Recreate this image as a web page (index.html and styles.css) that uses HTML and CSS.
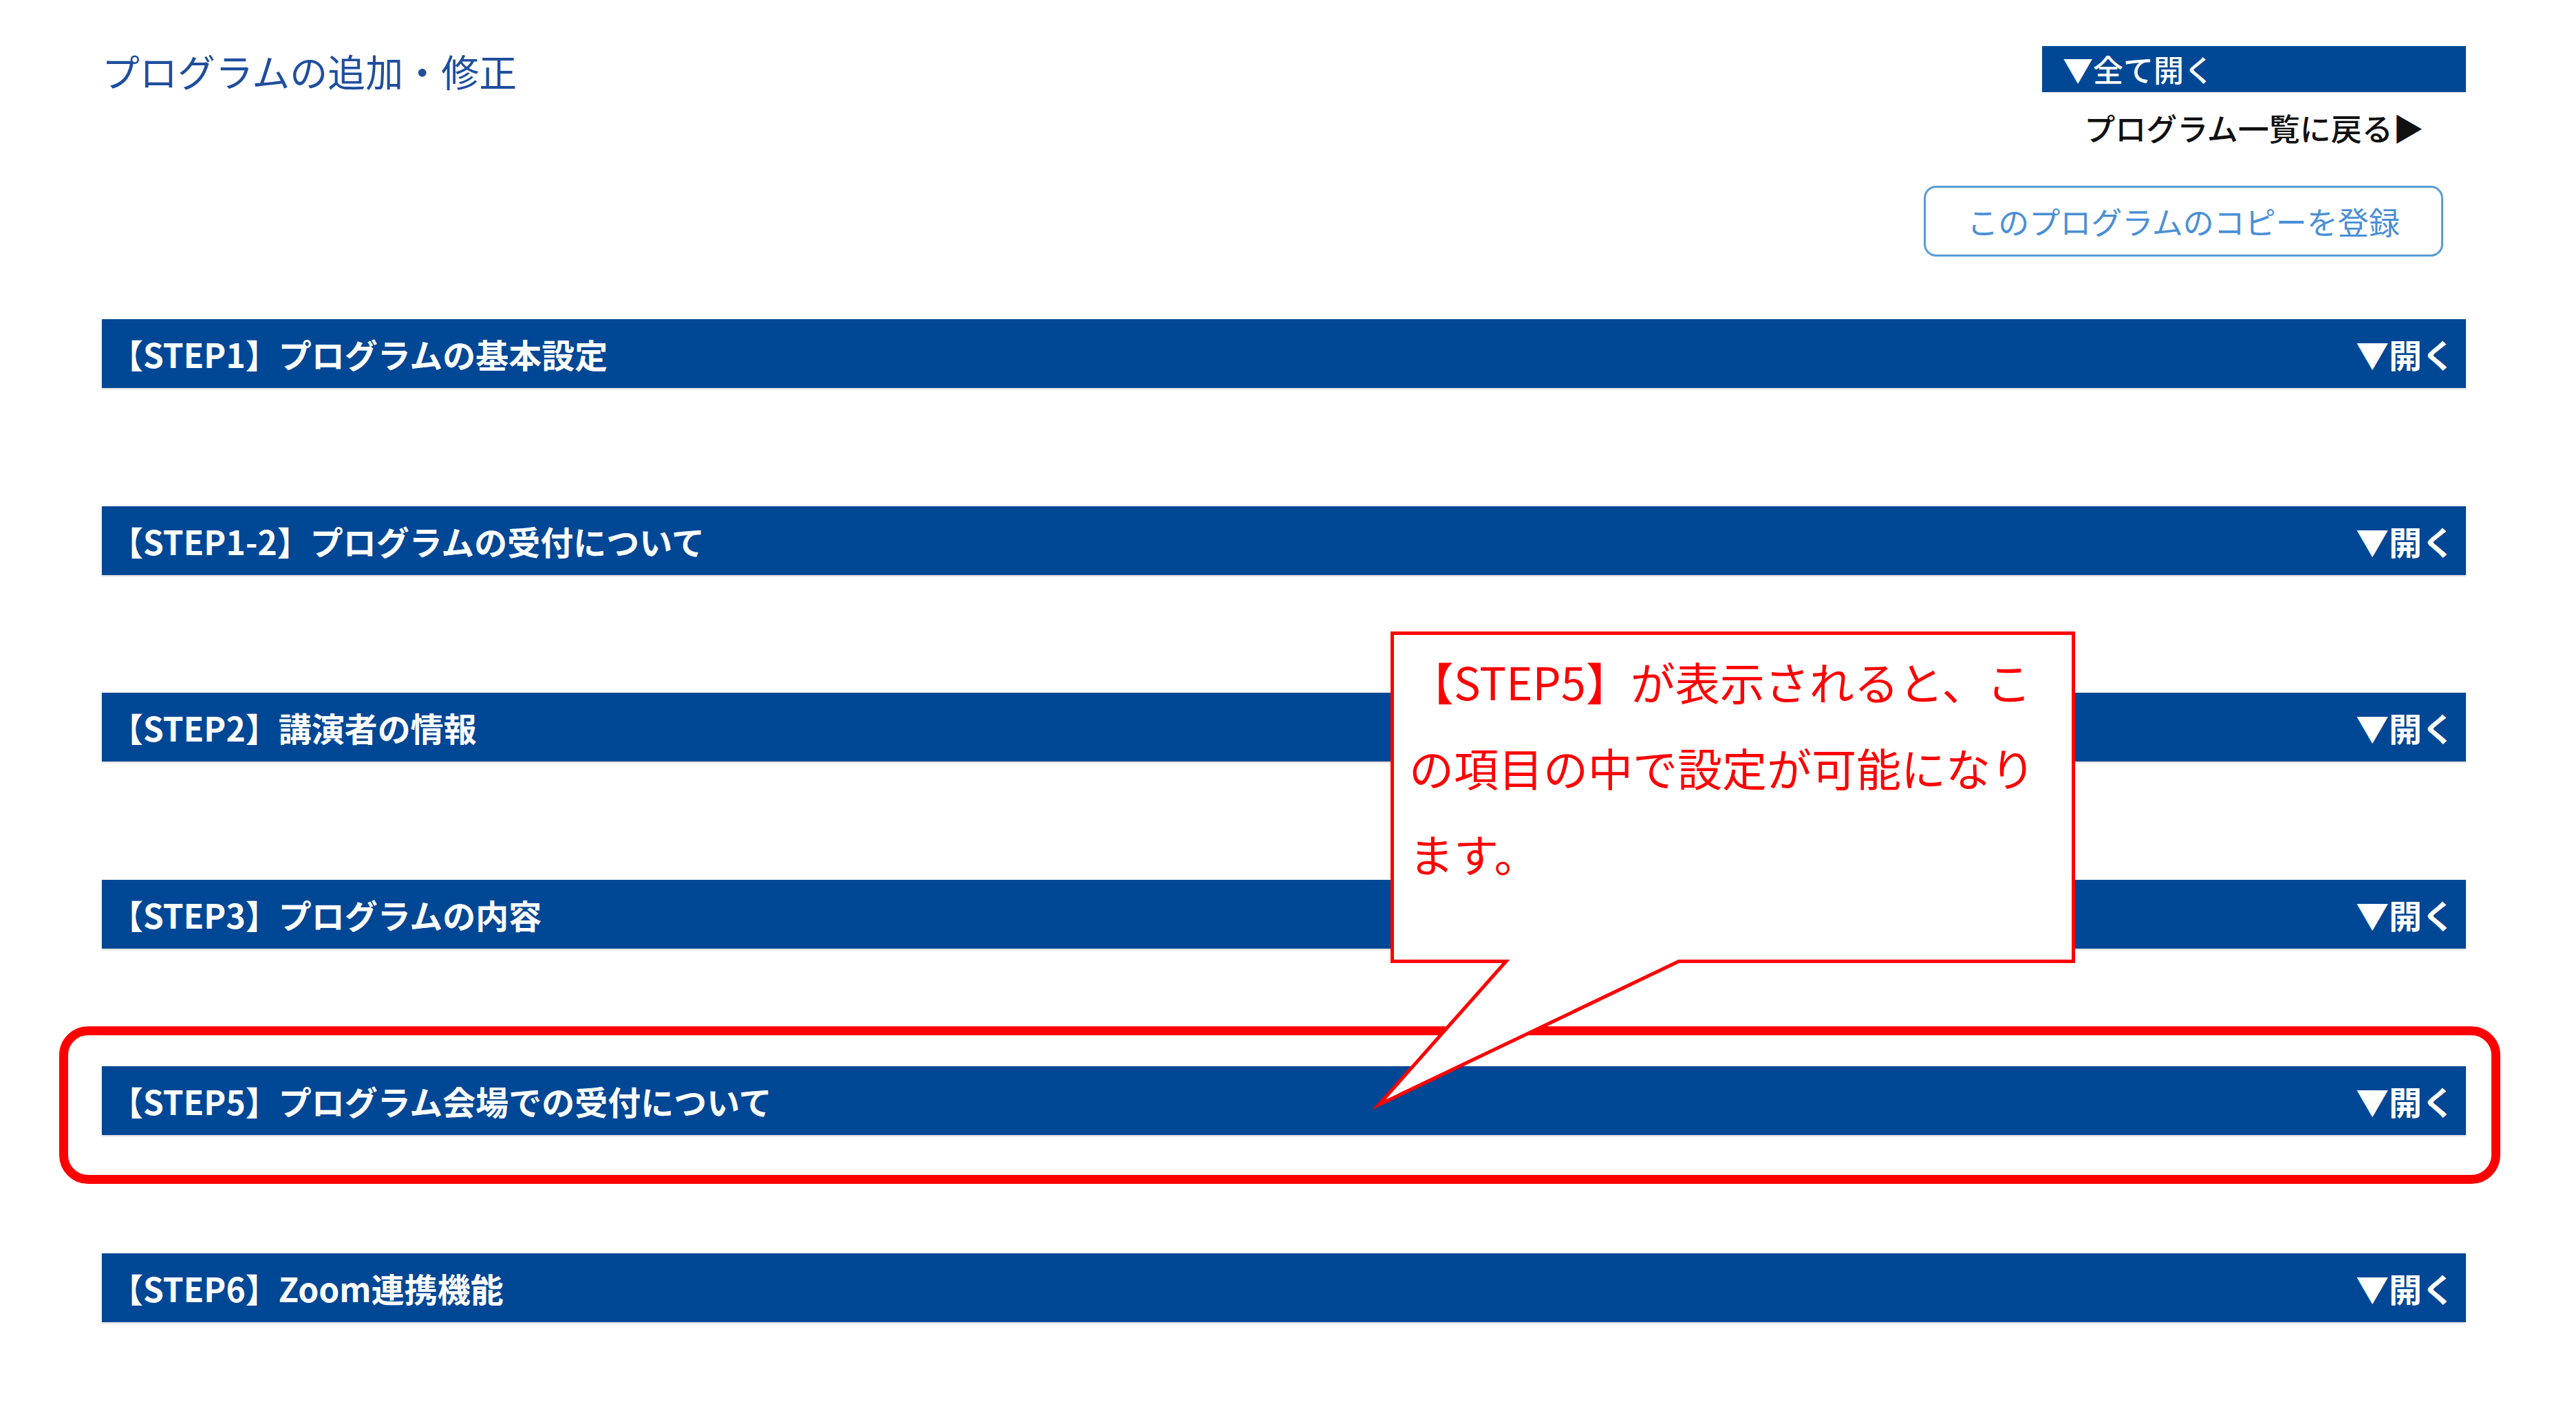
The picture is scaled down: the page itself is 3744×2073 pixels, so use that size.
FILE: index.html
```html
<!DOCTYPE html>
<html lang="ja">

<head>
    <meta charset="UTF-8">
    <meta name="viewport" content="width=device-width, initial-scale=1.0">
    <title>プログラムの追加・修正</title>
    <link rel="stylesheet" href="styles.css">
</head>

<body>
    <div class="page">
        <header class="page-head">
            <h1 class="page-title">プログラムの追加・修正</h1>
            <div class="head-actions">
                <div class="open-all">▼全て開く</div>
                <a class="back-link" href="#">プログラム一覧に戻る▶</a>
                <button class="copy-btn">このプログラムのコピーを登録</button>
            </div>
        </header>

        <div class="steps">
            <div class="step"><span class="step-title">【STEP1】プログラムの基本設定</span><span class="step-toggle">▼開く</span></div>
            <div class="step"><span class="step-title">【STEP1-2】プログラムの受付について</span><span class="step-toggle">▼開く</span></div>
            <div class="step"><span class="step-title">【STEP2】講演者の情報</span><span class="step-toggle">▼開く</span></div>
            <div class="step"><span class="step-title">【STEP3】プログラムの内容</span><span class="step-toggle">▼開く</span></div>
            <div class="step"><span class="step-title">【STEP5】プログラム会場での受付について</span><span class="step-toggle">▼開く</span></div>
            <div class="step"><span class="step-title">【STEP6】Zoom連携機能</span><span class="step-toggle">▼開く</span></div>
        </div>

        <!-- annotation: highlight + speech bubble -->
        <div class="mark"></div>
        <svg class="callout-shape" viewBox="0 0 3744 2073">
            <path d="M2023.5 920.5 H3013.5 V1397.5 H2440 L2004 1606 L2189 1397.5 H2023.5 Z" />
        </svg>
        <p class="callout-text">【STEP5】が表示されると、こ<br>の項目の中で設定が可能になり<br>ます。</p>
    </div>
</body>

</html>
```

FILE: styles.css
```css
body {
    margin: 0;
    background: #fff;
    font-family: "Noto Sans CJK JP", "Noto Sans", sans-serif;
}

.page {
    position: relative;
    width: 3744px;
    height: 2073px;
    padding: 0 160px 0 148px;
    box-sizing: border-box;
    overflow: hidden;
}

.page-head {
    display: flex;
    justify-content: space-between;
    align-items: flex-start;
    height: 373px;
}

.page-title {
    margin: 62px 0 0 0;
    font-size: 55px;
    font-weight: 400;
    line-height: 81px;
    color: #1f4e9d;
}

.head-actions {
    display: flex;
    flex-direction: column;
    align-items: flex-end;
}

.open-all {
    width: 616px;
    height: 67px;
    margin-top: 67px;
    padding-left: 30px;
    box-sizing: border-box;
    background-color: #004795;
    color: #fff;
    font-size: 44px;
    font-weight: 500;
    line-height: 67px;
}

.back-link {
    width: 616px;
    margin-top: 22px;
    text-align: center;
    font-size: 45px;
    font-weight: 500;
    line-height: 60px;
    color: #111;
    text-decoration: none;
}

.copy-btn {
    width: 755px;
    height: 103px;
    margin-top: 54px;
    margin-right: 33px;
    border: 3px solid #5b9bd5;
    border-radius: 18px;
    background: #fff;
    color: #4a8fd6;
    font-family: inherit;
    font-size: 45px;
}

.steps {
    padding-top: 91px;
}

.step {
    display: flex;
    justify-content: space-between;
    align-items: center;
    height: 100px;
    margin-bottom: 171.5px;
    padding: 0 16px 0 12px;
    background-color: #004795;
    color: #fff;
    font-size: 48px;
    font-weight: 700;
    box-shadow: 0 2px 2px rgba(0, 0, 0, 0.15);
}

.mark {
    position: absolute;
    left: 86px;
    top: 1492px;
    width: 3548px;
    height: 229px;
    border: 13px solid #ff0000;
    border-radius: 42px;
    box-sizing: border-box;
}

.callout-shape {
    position: absolute;
    left: 0;
    top: 0;
    width: 3744px;
    height: 2073px;
    pointer-events: none;
}

.callout-shape path {
    fill: #fff;
    stroke: #ff0000;
    stroke-width: 5;
    stroke-miterlimit: 12;
}

.callout-text {
    position: absolute;
    left: 2048px;
    top: 928px;
    margin: 0;
    white-space: nowrap;
    font-size: 65px;
    line-height: 125px;
    color: #ff0000;
}
```
